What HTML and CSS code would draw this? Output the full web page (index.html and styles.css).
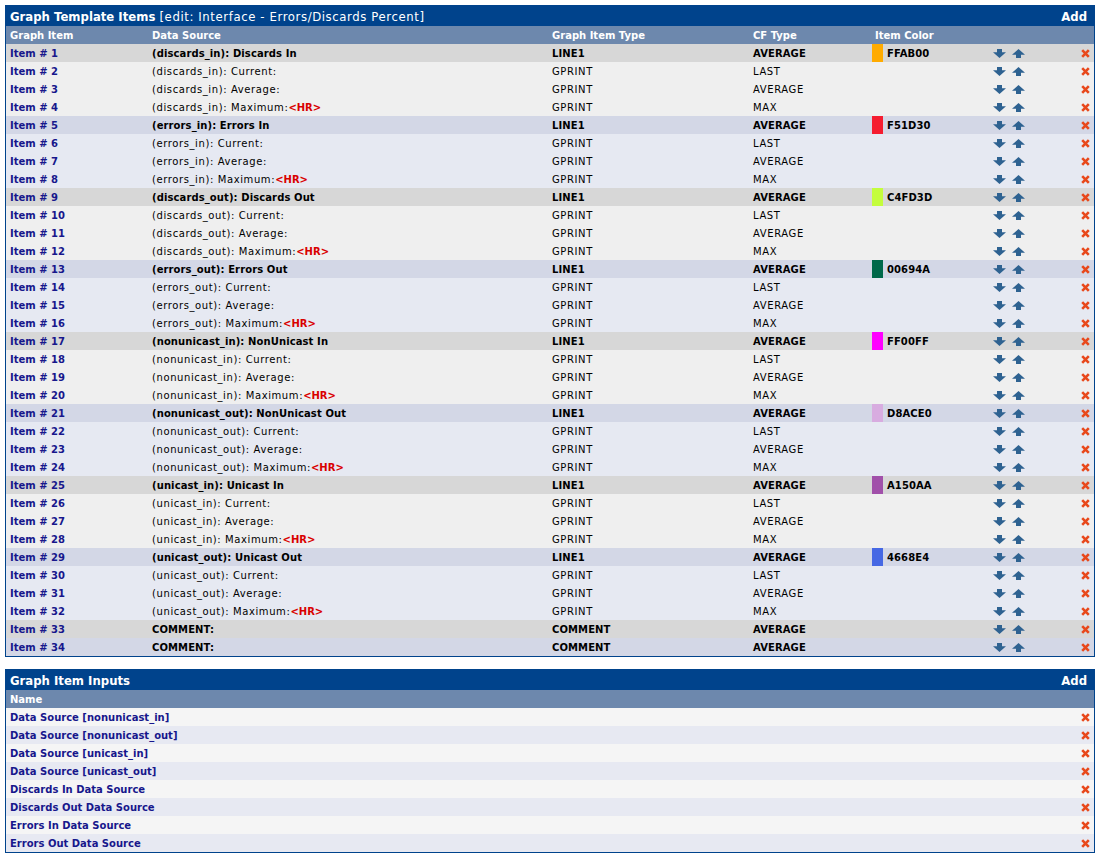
FILE: index.html
```html
<!DOCTYPE html>
<html>
<head>
<meta charset="utf-8">
<title>Graph Template Items</title>
<link rel="stylesheet" href="styles.css">
</head>
<body>
<svg class="defs" width="0" height="0" aria-hidden="true">
  <defs>
    <symbol id="down" viewBox="0 0 13 9"><path d="M4 0h5v3.2h4L6.5 9 0 3.2h4z"/></symbol>
    <symbol id="up" viewBox="0 0 13 9"><path d="M6.5 0L13 5.8H9V9H4V5.8H0z"/></symbol>
    <symbol id="del" viewBox="0 0 9 9"><path d="M1.2 1.2L7.8 7.8M7.8 1.2L1.2 7.8" stroke="#e8481b" stroke-width="2.6" fill="none"/></symbol>
  </defs>
</svg>

<div class="panel">
  <div class="title"><span>Graph Template Items <span class="sub">[edit: Interface - Errors/Discards Percent]</span></span><span>Add</span></div>
  <table class="items">
    <colgroup><col class="c1"><col class="c2"><col class="c3"><col class="c4"><col class="c5"><col class="c6"><col class="c7"><col></colgroup>
    <tr class="head"><th>Graph Item</th><th>Data Source</th><th>Graph Item Type</th><th>CF Type</th><th colspan="2" class="colorhead">Item Color</th><th></th><th></th></tr>

    <tr class="ga gh"><td><a class="lnk">Item # 1</a></td><td>(discards_in): Discards In</td><td>LINE1</td><td>AVERAGE</td><td class="sw" style="background-color:#FFAB00"></td><td class="hex">FFAB00</td><td class="mv"><div class="mvw"><svg class="ar"><use href="#down"/></svg><svg class="ar up"><use href="#up"/></svg></div></td><td class="dl"><div class="dlw"><svg class="x"><use href="#del"/></svg></div></td></tr>
    <tr class="ga"><td><a class="lnk">Item # 2</a></td><td>(discards_in): Current:</td><td>GPRINT</td><td>LAST</td><td class="sw"></td><td></td><td class="mv"><div class="mvw"><svg class="ar"><use href="#down"/></svg><svg class="ar up"><use href="#up"/></svg></div></td><td class="dl"><div class="dlw"><svg class="x"><use href="#del"/></svg></div></td></tr>
    <tr class="ga"><td><a class="lnk">Item # 3</a></td><td>(discards_in): Average:</td><td>GPRINT</td><td>AVERAGE</td><td class="sw"></td><td></td><td class="mv"><div class="mvw"><svg class="ar"><use href="#down"/></svg><svg class="ar up"><use href="#up"/></svg></div></td><td class="dl"><div class="dlw"><svg class="x"><use href="#del"/></svg></div></td></tr>
    <tr class="ga"><td><a class="lnk">Item # 4</a></td><td>(discards_in): Maximum:<span class="hr">&lt;HR&gt;</span></td><td>GPRINT</td><td>MAX</td><td class="sw"></td><td></td><td class="mv"><div class="mvw"><svg class="ar"><use href="#down"/></svg><svg class="ar up"><use href="#up"/></svg></div></td><td class="dl"><div class="dlw"><svg class="x"><use href="#del"/></svg></div></td></tr>

    <tr class="gb gh"><td><a class="lnk">Item # 5</a></td><td>(errors_in): Errors In</td><td>LINE1</td><td>AVERAGE</td><td class="sw" style="background-color:#F51D30"></td><td class="hex">F51D30</td><td class="mv"><div class="mvw"><svg class="ar"><use href="#down"/></svg><svg class="ar up"><use href="#up"/></svg></div></td><td class="dl"><div class="dlw"><svg class="x"><use href="#del"/></svg></div></td></tr>
    <tr class="gb"><td><a class="lnk">Item # 6</a></td><td>(errors_in): Current:</td><td>GPRINT</td><td>LAST</td><td class="sw"></td><td></td><td class="mv"><div class="mvw"><svg class="ar"><use href="#down"/></svg><svg class="ar up"><use href="#up"/></svg></div></td><td class="dl"><div class="dlw"><svg class="x"><use href="#del"/></svg></div></td></tr>
    <tr class="gb"><td><a class="lnk">Item # 7</a></td><td>(errors_in): Average:</td><td>GPRINT</td><td>AVERAGE</td><td class="sw"></td><td></td><td class="mv"><div class="mvw"><svg class="ar"><use href="#down"/></svg><svg class="ar up"><use href="#up"/></svg></div></td><td class="dl"><div class="dlw"><svg class="x"><use href="#del"/></svg></div></td></tr>
    <tr class="gb"><td><a class="lnk">Item # 8</a></td><td>(errors_in): Maximum:<span class="hr">&lt;HR&gt;</span></td><td>GPRINT</td><td>MAX</td><td class="sw"></td><td></td><td class="mv"><div class="mvw"><svg class="ar"><use href="#down"/></svg><svg class="ar up"><use href="#up"/></svg></div></td><td class="dl"><div class="dlw"><svg class="x"><use href="#del"/></svg></div></td></tr>

    <tr class="ga gh"><td><a class="lnk">Item # 9</a></td><td>(discards_out): Discards Out</td><td>LINE1</td><td>AVERAGE</td><td class="sw" style="background-color:#C4FD3D"></td><td class="hex">C4FD3D</td><td class="mv"><div class="mvw"><svg class="ar"><use href="#down"/></svg><svg class="ar up"><use href="#up"/></svg></div></td><td class="dl"><div class="dlw"><svg class="x"><use href="#del"/></svg></div></td></tr>
    <tr class="ga"><td><a class="lnk">Item # 10</a></td><td>(discards_out): Current:</td><td>GPRINT</td><td>LAST</td><td class="sw"></td><td></td><td class="mv"><div class="mvw"><svg class="ar"><use href="#down"/></svg><svg class="ar up"><use href="#up"/></svg></div></td><td class="dl"><div class="dlw"><svg class="x"><use href="#del"/></svg></div></td></tr>
    <tr class="ga"><td><a class="lnk">Item # 11</a></td><td>(discards_out): Average:</td><td>GPRINT</td><td>AVERAGE</td><td class="sw"></td><td></td><td class="mv"><div class="mvw"><svg class="ar"><use href="#down"/></svg><svg class="ar up"><use href="#up"/></svg></div></td><td class="dl"><div class="dlw"><svg class="x"><use href="#del"/></svg></div></td></tr>
    <tr class="ga"><td><a class="lnk">Item # 12</a></td><td>(discards_out): Maximum:<span class="hr">&lt;HR&gt;</span></td><td>GPRINT</td><td>MAX</td><td class="sw"></td><td></td><td class="mv"><div class="mvw"><svg class="ar"><use href="#down"/></svg><svg class="ar up"><use href="#up"/></svg></div></td><td class="dl"><div class="dlw"><svg class="x"><use href="#del"/></svg></div></td></tr>

    <tr class="gb gh"><td><a class="lnk">Item # 13</a></td><td>(errors_out): Errors Out</td><td>LINE1</td><td>AVERAGE</td><td class="sw" style="background-color:#00694A"></td><td class="hex">00694A</td><td class="mv"><div class="mvw"><svg class="ar"><use href="#down"/></svg><svg class="ar up"><use href="#up"/></svg></div></td><td class="dl"><div class="dlw"><svg class="x"><use href="#del"/></svg></div></td></tr>
    <tr class="gb"><td><a class="lnk">Item # 14</a></td><td>(errors_out): Current:</td><td>GPRINT</td><td>LAST</td><td class="sw"></td><td></td><td class="mv"><div class="mvw"><svg class="ar"><use href="#down"/></svg><svg class="ar up"><use href="#up"/></svg></div></td><td class="dl"><div class="dlw"><svg class="x"><use href="#del"/></svg></div></td></tr>
    <tr class="gb"><td><a class="lnk">Item # 15</a></td><td>(errors_out): Average:</td><td>GPRINT</td><td>AVERAGE</td><td class="sw"></td><td></td><td class="mv"><div class="mvw"><svg class="ar"><use href="#down"/></svg><svg class="ar up"><use href="#up"/></svg></div></td><td class="dl"><div class="dlw"><svg class="x"><use href="#del"/></svg></div></td></tr>
    <tr class="gb"><td><a class="lnk">Item # 16</a></td><td>(errors_out): Maximum:<span class="hr">&lt;HR&gt;</span></td><td>GPRINT</td><td>MAX</td><td class="sw"></td><td></td><td class="mv"><div class="mvw"><svg class="ar"><use href="#down"/></svg><svg class="ar up"><use href="#up"/></svg></div></td><td class="dl"><div class="dlw"><svg class="x"><use href="#del"/></svg></div></td></tr>

    <tr class="ga gh"><td><a class="lnk">Item # 17</a></td><td>(nonunicast_in): NonUnicast In</td><td>LINE1</td><td>AVERAGE</td><td class="sw" style="background-color:#FF00FF"></td><td class="hex">FF00FF</td><td class="mv"><div class="mvw"><svg class="ar"><use href="#down"/></svg><svg class="ar up"><use href="#up"/></svg></div></td><td class="dl"><div class="dlw"><svg class="x"><use href="#del"/></svg></div></td></tr>
    <tr class="ga"><td><a class="lnk">Item # 18</a></td><td>(nonunicast_in): Current:</td><td>GPRINT</td><td>LAST</td><td class="sw"></td><td></td><td class="mv"><div class="mvw"><svg class="ar"><use href="#down"/></svg><svg class="ar up"><use href="#up"/></svg></div></td><td class="dl"><div class="dlw"><svg class="x"><use href="#del"/></svg></div></td></tr>
    <tr class="ga"><td><a class="lnk">Item # 19</a></td><td>(nonunicast_in): Average:</td><td>GPRINT</td><td>AVERAGE</td><td class="sw"></td><td></td><td class="mv"><div class="mvw"><svg class="ar"><use href="#down"/></svg><svg class="ar up"><use href="#up"/></svg></div></td><td class="dl"><div class="dlw"><svg class="x"><use href="#del"/></svg></div></td></tr>
    <tr class="ga"><td><a class="lnk">Item # 20</a></td><td>(nonunicast_in): Maximum:<span class="hr">&lt;HR&gt;</span></td><td>GPRINT</td><td>MAX</td><td class="sw"></td><td></td><td class="mv"><div class="mvw"><svg class="ar"><use href="#down"/></svg><svg class="ar up"><use href="#up"/></svg></div></td><td class="dl"><div class="dlw"><svg class="x"><use href="#del"/></svg></div></td></tr>

    <tr class="gb gh"><td><a class="lnk">Item # 21</a></td><td>(nonunicast_out): NonUnicast Out</td><td>LINE1</td><td>AVERAGE</td><td class="sw" style="background-color:#D8ACE0"></td><td class="hex">D8ACE0</td><td class="mv"><div class="mvw"><svg class="ar"><use href="#down"/></svg><svg class="ar up"><use href="#up"/></svg></div></td><td class="dl"><div class="dlw"><svg class="x"><use href="#del"/></svg></div></td></tr>
    <tr class="gb"><td><a class="lnk">Item # 22</a></td><td>(nonunicast_out): Current:</td><td>GPRINT</td><td>LAST</td><td class="sw"></td><td></td><td class="mv"><div class="mvw"><svg class="ar"><use href="#down"/></svg><svg class="ar up"><use href="#up"/></svg></div></td><td class="dl"><div class="dlw"><svg class="x"><use href="#del"/></svg></div></td></tr>
    <tr class="gb"><td><a class="lnk">Item # 23</a></td><td>(nonunicast_out): Average:</td><td>GPRINT</td><td>AVERAGE</td><td class="sw"></td><td></td><td class="mv"><div class="mvw"><svg class="ar"><use href="#down"/></svg><svg class="ar up"><use href="#up"/></svg></div></td><td class="dl"><div class="dlw"><svg class="x"><use href="#del"/></svg></div></td></tr>
    <tr class="gb"><td><a class="lnk">Item # 24</a></td><td>(nonunicast_out): Maximum:<span class="hr">&lt;HR&gt;</span></td><td>GPRINT</td><td>MAX</td><td class="sw"></td><td></td><td class="mv"><div class="mvw"><svg class="ar"><use href="#down"/></svg><svg class="ar up"><use href="#up"/></svg></div></td><td class="dl"><div class="dlw"><svg class="x"><use href="#del"/></svg></div></td></tr>

    <tr class="ga gh"><td><a class="lnk">Item # 25</a></td><td>(unicast_in): Unicast In</td><td>LINE1</td><td>AVERAGE</td><td class="sw" style="background-color:#A150AA"></td><td class="hex">A150AA</td><td class="mv"><div class="mvw"><svg class="ar"><use href="#down"/></svg><svg class="ar up"><use href="#up"/></svg></div></td><td class="dl"><div class="dlw"><svg class="x"><use href="#del"/></svg></div></td></tr>
    <tr class="ga"><td><a class="lnk">Item # 26</a></td><td>(unicast_in): Current:</td><td>GPRINT</td><td>LAST</td><td class="sw"></td><td></td><td class="mv"><div class="mvw"><svg class="ar"><use href="#down"/></svg><svg class="ar up"><use href="#up"/></svg></div></td><td class="dl"><div class="dlw"><svg class="x"><use href="#del"/></svg></div></td></tr>
    <tr class="ga"><td><a class="lnk">Item # 27</a></td><td>(unicast_in): Average:</td><td>GPRINT</td><td>AVERAGE</td><td class="sw"></td><td></td><td class="mv"><div class="mvw"><svg class="ar"><use href="#down"/></svg><svg class="ar up"><use href="#up"/></svg></div></td><td class="dl"><div class="dlw"><svg class="x"><use href="#del"/></svg></div></td></tr>
    <tr class="ga"><td><a class="lnk">Item # 28</a></td><td>(unicast_in): Maximum:<span class="hr">&lt;HR&gt;</span></td><td>GPRINT</td><td>MAX</td><td class="sw"></td><td></td><td class="mv"><div class="mvw"><svg class="ar"><use href="#down"/></svg><svg class="ar up"><use href="#up"/></svg></div></td><td class="dl"><div class="dlw"><svg class="x"><use href="#del"/></svg></div></td></tr>

    <tr class="gb gh"><td><a class="lnk">Item # 29</a></td><td>(unicast_out): Unicast Out</td><td>LINE1</td><td>AVERAGE</td><td class="sw" style="background-color:#4668E4"></td><td class="hex">4668E4</td><td class="mv"><div class="mvw"><svg class="ar"><use href="#down"/></svg><svg class="ar up"><use href="#up"/></svg></div></td><td class="dl"><div class="dlw"><svg class="x"><use href="#del"/></svg></div></td></tr>
    <tr class="gb"><td><a class="lnk">Item # 30</a></td><td>(unicast_out): Current:</td><td>GPRINT</td><td>LAST</td><td class="sw"></td><td></td><td class="mv"><div class="mvw"><svg class="ar"><use href="#down"/></svg><svg class="ar up"><use href="#up"/></svg></div></td><td class="dl"><div class="dlw"><svg class="x"><use href="#del"/></svg></div></td></tr>
    <tr class="gb"><td><a class="lnk">Item # 31</a></td><td>(unicast_out): Average:</td><td>GPRINT</td><td>AVERAGE</td><td class="sw"></td><td></td><td class="mv"><div class="mvw"><svg class="ar"><use href="#down"/></svg><svg class="ar up"><use href="#up"/></svg></div></td><td class="dl"><div class="dlw"><svg class="x"><use href="#del"/></svg></div></td></tr>
    <tr class="gb"><td><a class="lnk">Item # 32</a></td><td>(unicast_out): Maximum:<span class="hr">&lt;HR&gt;</span></td><td>GPRINT</td><td>MAX</td><td class="sw"></td><td></td><td class="mv"><div class="mvw"><svg class="ar"><use href="#down"/></svg><svg class="ar up"><use href="#up"/></svg></div></td><td class="dl"><div class="dlw"><svg class="x"><use href="#del"/></svg></div></td></tr>

    <tr class="ga gh"><td><a class="lnk">Item # 33</a></td><td>COMMENT:</td><td>COMMENT</td><td>AVERAGE</td><td class="sw"></td><td></td><td class="mv"><div class="mvw"><svg class="ar"><use href="#down"/></svg><svg class="ar up"><use href="#up"/></svg></div></td><td class="dl"><div class="dlw"><svg class="x"><use href="#del"/></svg></div></td></tr>
    <tr class="gb gh"><td><a class="lnk">Item # 34</a></td><td>COMMENT:</td><td>COMMENT</td><td>AVERAGE</td><td class="sw"></td><td></td><td class="mv"><div class="mvw"><svg class="ar"><use href="#down"/></svg><svg class="ar up"><use href="#up"/></svg></div></td><td class="dl"><div class="dlw"><svg class="x"><use href="#del"/></svg></div></td></tr>
  </table>
</div>

<div class="panel second">
  <div class="title"><span>Graph Item Inputs</span><span>Add</span></div>
  <table class="inputs">
    <colgroup><col><col class="cx"></colgroup>
    <tr class="head"><th>Name</th><th></th></tr>
    <tr class="la"><td><a class="lnk">Data Source [nonunicast_in]</a></td><td class="dl"><div class="dlw"><svg class="x"><use href="#del"/></svg></div></td></tr>
    <tr class="lb"><td><a class="lnk">Data Source [nonunicast_out]</a></td><td class="dl"><div class="dlw"><svg class="x"><use href="#del"/></svg></div></td></tr>
    <tr class="la"><td><a class="lnk">Data Source [unicast_in]</a></td><td class="dl"><div class="dlw"><svg class="x"><use href="#del"/></svg></div></td></tr>
    <tr class="lb"><td><a class="lnk">Data Source [unicast_out]</a></td><td class="dl"><div class="dlw"><svg class="x"><use href="#del"/></svg></div></td></tr>
    <tr class="la"><td><a class="lnk">Discards In Data Source</a></td><td class="dl"><div class="dlw"><svg class="x"><use href="#del"/></svg></div></td></tr>
    <tr class="lb"><td><a class="lnk">Discards Out Data Source</a></td><td class="dl"><div class="dlw"><svg class="x"><use href="#del"/></svg></div></td></tr>
    <tr class="la"><td><a class="lnk">Errors In Data Source</a></td><td class="dl"><div class="dlw"><svg class="x"><use href="#del"/></svg></div></td></tr>
    <tr class="lb"><td><a class="lnk">Errors Out Data Source</a></td><td class="dl"><div class="dlw"><svg class="x"><use href="#del"/></svg></div></td></tr>
  </table>
</div>
</body>
</html>
```

FILE: styles.css
```css
html, body {
  background: #ffffff;
}
body {
  margin: 5px 5px 0 5px;
  font-family: "DejaVu Sans", Verdana, sans-serif;
  font-size: 10px;
  color: #000000;
}
.defs {
  position: absolute;
  width: 0;
  height: 0;
  overflow: hidden;
}
.panel {
  border: 1px solid #00438c;
  background: #f5f5f5;
}
.panel.second {
  margin-top: 12px;
}
.title {
  box-sizing: border-box;
  height: 20px;
  background: #00438c;
  color: #ffffff;
  display: flex;
  align-items: center;
  justify-content: space-between;
  padding: 2px 7px 0 4px;
  font-family: "DejaVu Sans", Verdana, sans-serif;
  font-size: 11.7px;
  font-weight: bold;
  white-space: nowrap;
}
.title .sub {
  font-weight: normal;
  letter-spacing: 0.6px;
}
table {
  width: 100%;
  border-collapse: collapse;
  border-spacing: 0;
  table-layout: fixed;
}
col.c1 { width: 142px; }
col.c2 { width: 400px; }
col.c3 { width: 201px; }
col.c4 { width: 123px; }
col.c5 { width: 11px; }
col.c6 { width: 107px; }
col.c7 { width: 40px; }
col.cx { width: 64px; }
th, td {
  box-sizing: border-box;
  height: 18px;
  padding: 2px 4px 0 4px;
  line-height: 12px;
  text-align: left;
  vertical-align: middle;
  white-space: nowrap;
  overflow: hidden;
  letter-spacing: 0.6px;
}
.head th {
  background: #6d88ad;
  color: #ffffff;
  font-weight: bold;
  font-size: 10px;
  letter-spacing: 0;
}
.head th.colorhead {
  padding-left: 3px;
}
.ga { background: #efefef; }
.gb { background: #e6e9f2; }
.ga.gh { background: #d7d7d7; }
.gb.gh { background: #d3d7e6; }
.gh td {
  font-weight: bold;
  letter-spacing: 0.1px;
}
.la { background: #f5f5f5; }
.lb { background: #e7e9f2; }
.lnk {
  color: #17178c;
  font-weight: bold;
  text-decoration: none;
  letter-spacing: 0;
}
.hr {
  color: #d90000;
  font-weight: bold;
  letter-spacing: 0;
}
td.sw {
  padding: 0;
}
td.hex {
  padding-left: 4px;
}
td.mv {
  padding: 0 0 0 3px;
}
.mvw {
  display: flex;
  align-items: center;
  height: 18px;
}
.ar {
  display: block;
  width: 13px;
  height: 9px;
  fill: #2e6291;
}
.ar.up {
  margin-left: 6px;
}
td.dl {
  padding: 0 4px 0 0;
}
.dlw {
  display: flex;
  align-items: center;
  justify-content: flex-end;
  height: 18px;
}
.x {
  display: block;
  width: 9px;
  height: 9px;
}
```
